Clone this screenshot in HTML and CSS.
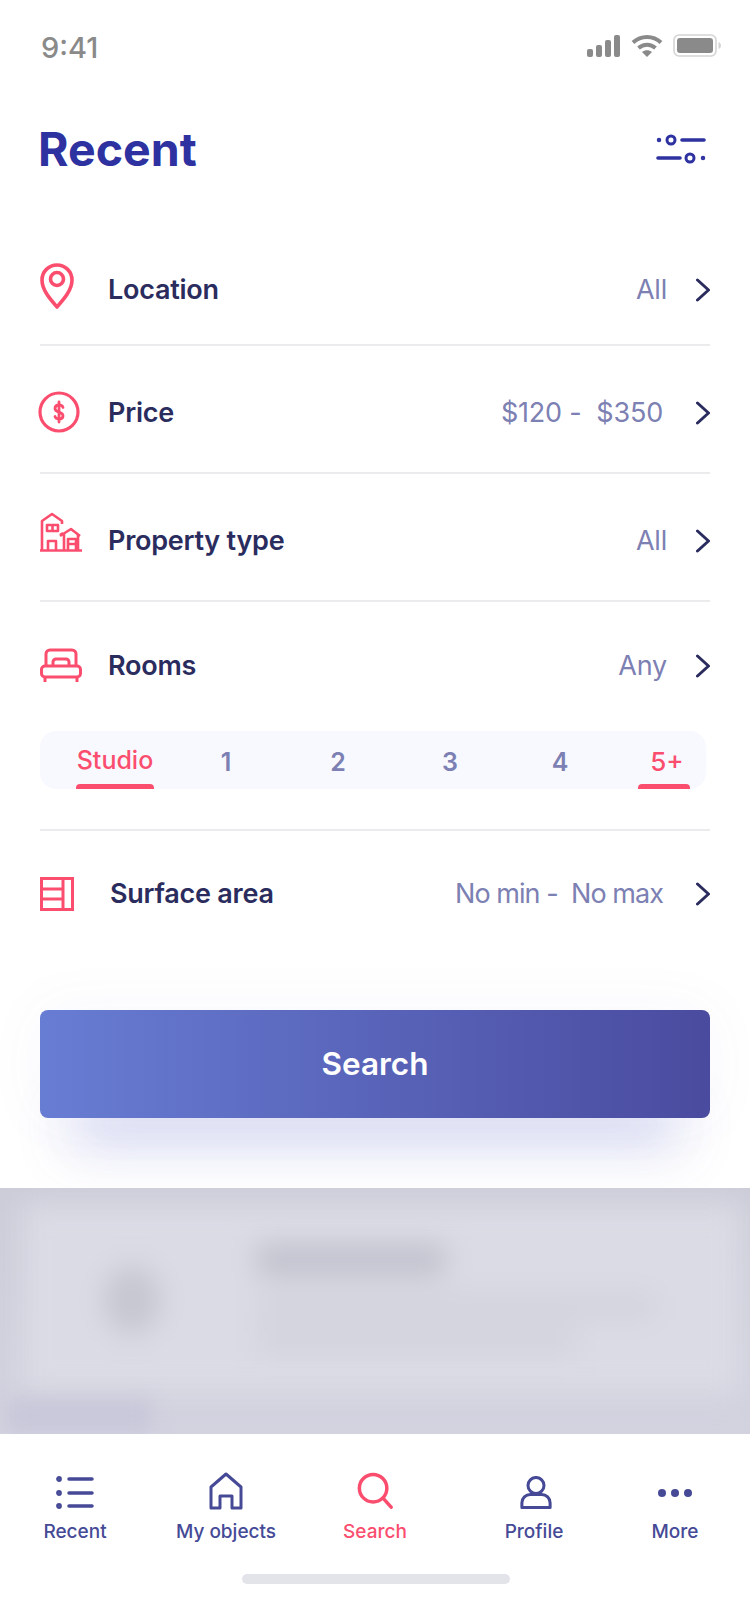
FILE: index.html
```html
<!DOCTYPE html>
<html lang="en">
<head>
<meta charset="utf-8">
<title>Recent</title>
<link rel="stylesheet" href="styles.css">
</head>
<body>
<main class="screen">
  <div class="status">
    <span class="time">9:41</span>
    <div class="status-icons">
      <svg width="34" height="22" viewBox="0 0 34 22" fill="#8a8a8a"><rect x="0" y="14" width="6" height="8" rx="2"/><rect x="9" y="10" width="6" height="12" rx="2"/><rect x="18" y="5" width="6" height="17" rx="2"/><rect x="27" y="0" width="6" height="22" rx="2"/></svg>
      <svg width="32" height="24" viewBox="0 0 32 24" fill="none" stroke="#8a8a8a" stroke-width="4"><path d="M2 8.500C10 1 22 1 30 8.500"/><path d="M7.500 14C12.500 9.500 19.500 9.500 24.500 14"/><path d="M16 23l-5-5c3-2.400 7-2.400 10 0z" fill="#8a8a8a" stroke="none"/></svg>
      <svg width="48" height="24" viewBox="0 0 48 24"><rect x="1" y="1" width="42" height="21" rx="5" fill="none" stroke="#d4d4d4" stroke-width="1.600"/><rect x="4" y="4" width="36" height="15" rx="3" fill="#8a8a8a"/><path d="M45.500 8v7c1.500-.5 2.500-2 2.500-3.500s-1-3-2.500-3.500z" fill="#d4d4d4"/></svg>
    </div>
  </div>

  <header class="title-bar">
    <h1>Recent</h1>
    <svg class="filter" width="50" height="30" viewBox="0 0 50 30" fill="none" stroke="#2e31a0" stroke-width="3.600" stroke-linecap="round"><path d="M26 6h22M2 24h22"/><circle cx="15" cy="6" r="4" stroke-width="3"/><circle cx="34" cy="24" r="4" stroke-width="3"/><circle cx="3" cy="6" r="1" stroke-width="2.500"/><circle cx="47" cy="24" r="1" stroke-width="2.500"/></svg>
  </header>

  <section class="filters">
    <div class="row row-location">
      <svg class="icon icon-pin" width="34" height="46" viewBox="0 0 34 46" fill="none" stroke="#fb4e6f" stroke-width="3.600" stroke-linejoin="round"><path d="M17 44C10 36 2 27 2 17a15 15 0 0 1 30 0c0 10-8 19-15 27z"/><circle cx="17" cy="16" r="6.500"/></svg>
      <span class="label">Location</span>
      <span class="value">All</span>
      <svg class="chev" width="14" height="24" viewBox="0 0 14 24"><path d="M1.500 2l11 10-11 10"/></svg>
    </div>
    <div class="row row-price">
      <svg class="icon icon-price" width="42" height="42" viewBox="0 0 42 42" fill="none" stroke="#fb4e6f" stroke-width="3.200" stroke-linecap="round" stroke-linejoin="round"><circle cx="21" cy="21" r="19"/><path stroke-width="2.800" d="M25 16.500c-.4-1.500-1.800-2.500-4-2.500-2.500 0-4 1.300-4 3.400 0 4.600 8 2.700 8 7.300 0 2-1.500 3.300-4 3.300-2.200 0-3.600-1-4-2.500M21 11v20"/></svg>
      <span class="label">Price</span>
      <span class="value value-wide">$120 -&nbsp; $350</span>
      <svg class="chev" width="14" height="24" viewBox="0 0 14 24"><path d="M1.500 2l11 10-11 10"/></svg>
    </div>
    <div class="row row-property">
      <svg class="icon icon-houses" width="42" height="40" viewBox="0 0 42 40" fill="none" stroke="#fb4e6f" stroke-width="2.600" stroke-linejoin="round"><path d="M0 38.500h42"/><path d="M2 38V9L12 2l10 7v3"/><path d="M24 38V22M23 21l-3 2M40 24L31 17l-11 7"/><path d="M38 38V22"/><rect x="7" y="13" width="11" height="6"/><path d="M12.500 13v6"/><path d="M8 38V29h8v9"/><path d="M28 38V27h8v11M28 32h8"/></svg>
      <span class="label">Property type</span>
      <span class="value">All</span>
      <svg class="chev" width="14" height="24" viewBox="0 0 14 24"><path d="M1.500 2l11 10-11 10"/></svg>
    </div>
    <div class="row row-rooms">
      <svg class="icon" width="42" height="34" viewBox="0 0 42 34" fill="none" stroke="#fb4e6f" stroke-width="3" stroke-linejoin="round"><path d="M6 18V6a4 4 0 0 1 4-4h22a4 4 0 0 1 4 4v12"/><path d="M13 18v-4a3 3 0 0 1 3-3h10a3 3 0 0 1 3 3v4"/><rect x="1.500" y="18" width="39" height="11" rx="3.500"/><path d="M5 29v5M37 29v5"/></svg>
      <span class="label">Rooms</span>
      <span class="value">Any</span>
      <svg class="chev" width="14" height="24" viewBox="0 0 14 24"><path d="M1.500 2l11 10-11 10"/></svg>
    </div>
    <div class="room-tabs">
      <span class="room room-on room-studio">Studio</span>
      <span class="room">1</span>
      <span class="room">2</span>
      <span class="room">3</span>
      <span class="room">4</span>
      <span class="room room-on room-five">5+</span>
    </div>
    <div class="row row-surface">
      <svg class="icon" width="34" height="34" viewBox="0 0 34 34" fill="none" stroke="#fb4e6f" stroke-width="3"><rect x="1.500" y="1.500" width="31" height="31"/><path d="M23 1.500v31M1.500 12h21.500M1.500 22h21.500"/></svg>
      <span class="label label-surface">Surface area</span>
      <span class="value value-wide value-tight">No min -&nbsp; No max</span>
      <svg class="chev" width="14" height="24" viewBox="0 0 14 24"><path d="M1.500 2l11 10-11 10"/></svg>
    </div>
  </section>

  <div class="action">
    <button class="search-btn" type="button">Search</button>
  </div>

  <section class="listing">
    <div class="listing-card">
      <div class="thumb"><span class="thumb-spot"></span></div>
      <div class="listing-text">
        <span class="listing-name"></span>
        <span class="listing-line listing-line-a"></span>
        <span class="listing-line listing-line-b"></span>
      </div>
    </div>
    <span class="listing-tag"></span>
  </section>

  <nav class="tabbar">
    <div class="tabs">
      <a class="tab">
        <svg width="38" height="34" viewBox="0 0 38 34" fill="none" stroke="#464a96" stroke-width="3.500" stroke-linecap="round"><path d="M13 3h23M13 17h23M13 30h23"/><circle cx="3" cy="3" r="1.300" stroke-width="3.200"/><circle cx="3" cy="17" r="1.300" stroke-width="3.200"/><circle cx="3" cy="30" r="1.300" stroke-width="3.200"/></svg>
        <span>Recent</span>
      </a>
      <a class="tab">
        <svg width="34" height="38" viewBox="0 0 34 38" fill="none" stroke="#464a96" stroke-width="3" stroke-linejoin="round"><path d="M2 36V15L17 2l15 13v21H23V24H11v12z"/></svg>
        <span>My objects</span>
      </a>
      <a class="tab tab-on">
        <svg width="36" height="38" viewBox="0 0 38 40" fill="none" stroke="#fb4e6f" stroke-width="3.700" stroke-linecap="round"><circle cx="17" cy="17" r="14.500"/><path d="M27.500 27.500L36 37"/></svg>
        <span>Search</span>
      </a>
      <a class="tab">
        <svg class="profile" width="32" height="34" viewBox="0 0 34 36" fill="none" stroke="#464a96" stroke-width="3.200" stroke-linejoin="round"><circle cx="17" cy="10" r="8.500"/><path d="M2 33.500v-5a9 9 0 0 1 9-9h12a9 9 0 0 1 9 9v5z"/></svg>
        <span>Profile</span>
      </a>
      <a class="tab">
        <svg class="more" width="36" height="34" viewBox="0 0 36 34" fill="#464a96"><circle cx="5" cy="17" r="4"/><circle cx="18" cy="17" r="4"/><circle cx="31" cy="17" r="4"/></svg>
        <span>More</span>
      </a>
    </div>
    <div class="home-bar"></div>
  </nav>
</main>
</body>
</html>
```

FILE: styles.css
```css
* { box-sizing: border-box; }

html, body { margin: 0; padding: 0; background: #fff; }

.screen {
  width: 750px;
  height: 1604px;
  overflow: hidden;
  font-family: Inter, "Noto Sans", sans-serif;
  background: #fff;
  display: flex;
  flex-direction: column;
}

/* status bar */
.status {
  height: 88px;
  padding: 30px 30px 0 41px;
  display: flex;
  justify-content: space-between;
  align-items: flex-start;
  flex: none;
}
.time { font-size: 29px; line-height: 36px; font-weight: 500; color: #8a8a8a; }
.status-icons { display: flex; align-items: center; gap: 10px; padding-top: 4px; margin-right: -1px; }

/* page title */
.title-bar {
  height: 122px;
  padding: 0 44px 0 38px;
  display: flex;
  justify-content: space-between;
  align-items: center;
  flex: none;
}
h1 { margin: 0; font-size: 46.500px; line-height: 54px; font-weight: 700; color: #2e31a0; }

/* filter rows */
.filters { padding: 0 40px; flex: none; }
.row {
  display: flex;
  align-items: center;
  border-bottom: 2px solid #ebebee;
}
.row-location { height: 136px; padding-top: 25px; }
.row-price { height: 128px; padding-top: 8px; }
.row-property { height: 128px; padding-top: 8px; }
.row-rooms { height: 102px; padding-top: 26px; border-bottom: 0; }
.row-surface { height: 125px; padding-top: 2px; border-top: 2px solid #ebebee; border-bottom: 0; margin-top: 40px; }

.icon { flex: none; }
.icon-pin { margin-bottom: 8px; }
.icon-price { margin: 0 2px 3px -2px; }
.icon-houses { margin-bottom: 18px; }
.row-rooms .icon { margin-bottom: 2px; }
.label {
  font-size: 27px;
  line-height: 34px;
  font-weight: 600;
  color: #2b2c5e;
  letter-spacing: -0.25px;
}
.row-location .label { margin-left: 34px; }
.row-price .label, .row-property .label, .row-rooms .label { margin-left: 26px; }
.label-surface { margin-left: 36px; }
.value {
  margin-left: auto;
  font-size: 27px;
  line-height: 34px;
  color: #7c80b3;
  margin-right: 29px;
  letter-spacing: -0.2px;
}
.value-wide { margin-right: 33px; }
.value-tight { letter-spacing: -0.95px; }
.chev { flex: none; fill: none; stroke: #2b2c5e; stroke-width: 3; stroke-linecap: round; stroke-linejoin: round; }

/* room count selector */
.room-tabs {
  width: 666px;
  height: 58px;
  margin-top: 27px;
  background: #f8f9fe;
  border-radius: 16px;
  display: grid;
  grid-template-columns: 150px 72px 152px 72px 148px 60px;
  justify-items: center;
  overflow: hidden;
}
.room {
  font-size: 25px;
  font-weight: 600;
  line-height: 30px;
  padding-top: 16px;
  color: #7c80b3;
  height: 58px;
  display: flex;
  flex-direction: column;
  justify-content: space-between;
}
.room-on { color: #fb4e6f; font-weight: 500; text-align: center; padding-top: 14px; }
.room-on::after {
  content: "";
  height: 5px;
  background: #fb4e6f;
  border-radius: 4px 4px 0 0;
}
.room-studio { width: 78px; }
.room-five { width: 52px; font-size: 26px; text-indent: 6px; padding-top: 16px; }

/* primary action */
.action { padding: 56px 40px 0; flex: none; height: 234px; }
.search-btn {
  width: 670px;
  height: 108px;
  padding-bottom: 2px;
  border: 0;
  border-radius: 8px;
  background: linear-gradient(90deg, #677dd3 0%, #4a4b9f 100%);
  color: #fff;
  font-family: inherit;
  font-size: 31.500px;
  font-weight: 600;
  box-shadow:
    0 60px 44px -50px rgba(75, 85, 200, 0.5),
    0 62px 50px -20px rgba(90, 95, 200, 0.1),
    0 0 60px rgba(90, 95, 190, 0.05);
}

/* dimmed listing behind the tab bar */
.listing {
  height: 246px;
  flex: none;
  background: linear-gradient(180deg, #cdcdd9 0%, #d3d3e0 100%);
  overflow: hidden;
  padding: 16px 0 0 22px;
  position: relative;
}
.listing-card {
  width: 720px;
  height: 190px;
  background: #dbdbe5;
  filter: blur(14px);
  display: flex;
  padding: 62px 0 0 82px;
}
.thumb { width: 60px; height: 80px; flex: none; display: flex; }
.thumb-spot { width: 56px; height: 68px; border-radius: 50%; background: #c6c6d1; }
.listing-text { margin-left: 92px; display: flex; flex-direction: column; margin-top: -21px; }
.listing-name { width: 190px; height: 30px; background: #c0c0cc; border-radius: 8px; }
.listing-line { height: 26px; background: #d3d3de; margin-top: 8px; }
.listing-line-a { width: 400px; margin-top: 18px; }
.listing-line-b { width: 320px; }
.listing-tag {
  position: absolute;
  left: 6px;
  bottom: 0;
  width: 146px;
  height: 36px;
  background: #c8c8da;
  filter: blur(9px);
}

/* bottom navigation */
.tabbar { flex: 1; background: #fff; padding-top: 34px; }
.tabs { display: grid; grid-template-columns: 150px 152px 146px 172px 110px; height: 106px; }
.tab {
  display: flex;
  flex-direction: column;
  align-items: center;
  justify-content: flex-end;
  color: #464a96;
  font-size: 19px;
  font-weight: 500;
  line-height: 24px;
  height: 76px;
  gap: 10px;
}
.tab-on { color: #fb4e6f; }
.profile { margin-left: 3px; }
.home-bar { width: 268px; height: 10px; margin: 0 0 0 242px; background: #e3e4ea; border-radius: 5px; }
```
